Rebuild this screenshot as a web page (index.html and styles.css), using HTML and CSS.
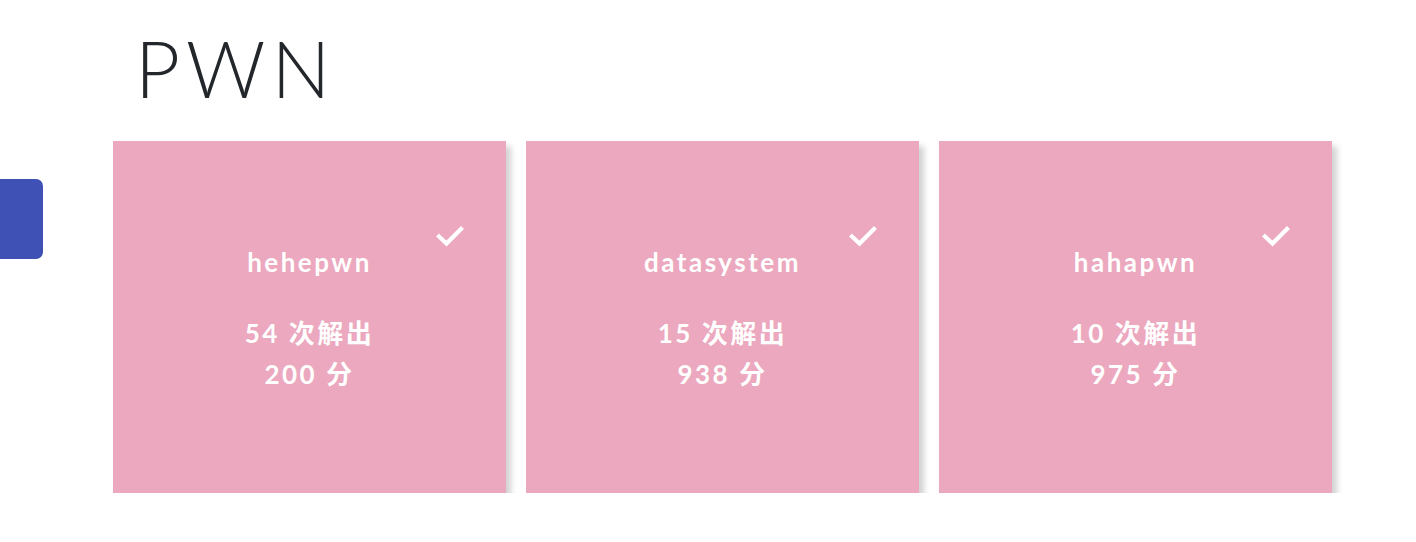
FILE: index.html
```html
<!DOCTYPE html>
<html lang="zh">
<head>
<meta charset="utf-8">
<title>PWN</title>
<link rel="stylesheet" href="styles.css">
</head>
<body>
<div class="side-tab"></div>
<main class="category">
  <h1 class="cat-title">PWN</h1>
  <div class="cards">
    <div class="card">
      <svg class="check" viewBox="0 0 28 22" width="28" height="22"><path d="M3 11.5 L10.5 18.5 L25 4" fill="none" stroke="#fff" stroke-width="4.2" stroke-linecap="square"/></svg>
      <div class="name">hehepwn</div>
      <div class="stats">54 次解出<br>200 分</div>
    </div>
    <div class="card">
      <svg class="check" viewBox="0 0 28 22" width="28" height="22"><path d="M3 11.5 L10.5 18.5 L25 4" fill="none" stroke="#fff" stroke-width="4.2" stroke-linecap="square"/></svg>
      <div class="name">datasystem</div>
      <div class="stats">15 次解出<br>938 分</div>
    </div>
    <div class="card">
      <svg class="check" viewBox="0 0 28 22" width="28" height="22"><path d="M3 11.5 L10.5 18.5 L25 4" fill="none" stroke="#fff" stroke-width="4.2" stroke-linecap="square"/></svg>
      <div class="name">hahapwn</div>
      <div class="stats">10 次解出<br>975 分</div>
    </div>
  </div>
</main>
</body>
</html>
```
FILE: styles.css
```css
html, body {
  margin: 0;
  padding: 0;
  background: #fff;
  font-family: Lato, "Noto Sans CJK SC", sans-serif;
}
.side-tab {
  position: absolute;
  left: 0;
  top: 179px;
  width: 43px;
  height: 80px;
  background: #3f51b5;
  border-radius: 0 7px 7px 0;
}
.category {
  padding: 20px 0 0 113px;
}
.cat-title {
  margin: 0 0 25px 22px;
  font-family: Lato, sans-serif;
  font-weight: 300;
  font-size: 78px;
  line-height: 96px;
  color: #23272b;
  letter-spacing: 6px;
}
.cards {
  display: flex;
  gap: 20px;
}
.card {
  position: relative;
  width: 393px;
  height: 352px;
  background: #eba8be;
  box-shadow: 5px 5px 6px rgba(0,0,0,0.18);
  color: #fff;
  font-weight: 700;
  font-size: 26px;
  letter-spacing: 2.5px;
  text-align: center;
  display: flex;
  flex-direction: column;
  justify-content: center;
  align-items: center;
  padding-top: 6px;
  box-sizing: border-box;
}
.check {
  position: absolute;
  right: 42px;
  top: 84px;
}
.name {
  line-height: 32px;
  margin-bottom: 35px;
}
.stats {
  line-height: 41px;
}
```
